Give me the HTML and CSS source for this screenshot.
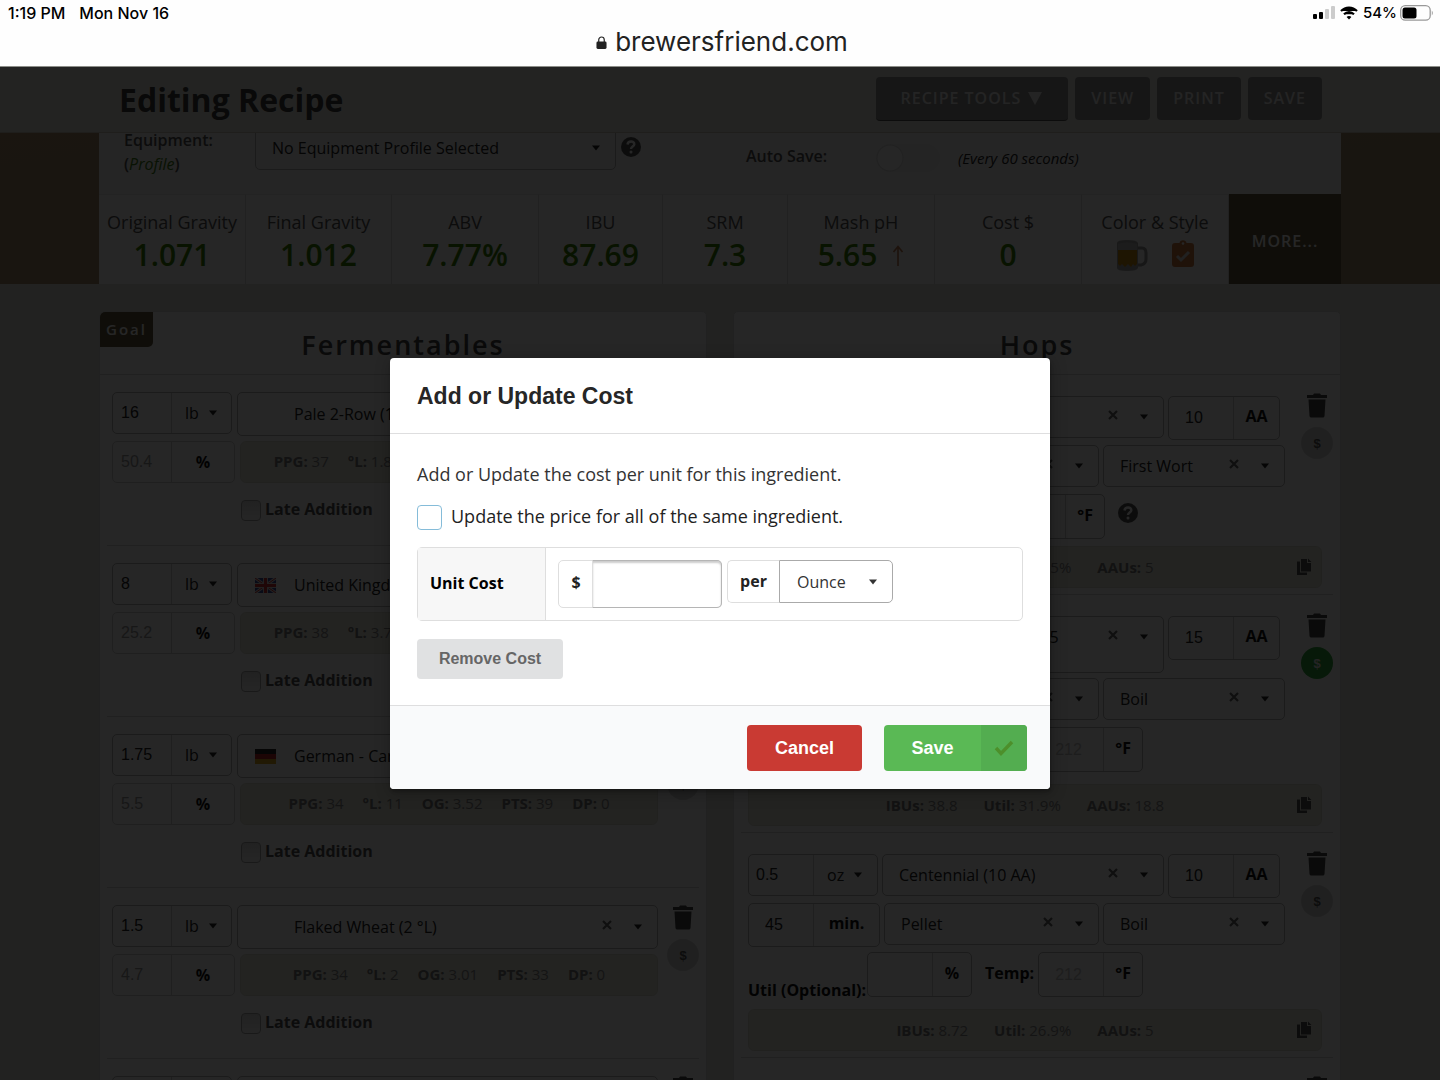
FILE: index.html
```html
<!DOCTYPE html>
<html lang="en">
<head>
    <meta charset="UTF-8">
    <meta name="viewport" content="width=device-width, initial-scale=1.0">
    <title>Editing Recipe - Brewer's Friend</title>
    <link rel="stylesheet" href="styles.css">
</head>
<body>
    <!-- Icon sprite -->
    <svg class="sprite" aria-hidden="true">
        <symbol id="trash" viewBox="0 0 22 25"><path d="M1 2h6l1-1.500h6L15 2h6v3H1zM2.500 6.500h17L18.500 23q-.2 1.500-1.700 1.500H5.200Q3.700 24.500 3.500 23z"/></symbol>
        <symbol id="caret" viewBox="0 0 10 6"><path d="M1 .5h8L5 5.500z"/></symbol>
        <symbol id="cross" viewBox="0 0 10 10"><path d="M1 1l8 8M9 1L1 9" fill="none" stroke="currentColor" stroke-width="2.200"/></symbol>
        <symbol id="copy" viewBox="0 0 16 18"><path d="M5 1h6v4h4v8.500H5z"/><path d="M12 .5L15.500 4H12zM1 3.500h3v11h7V17H1z"/></symbol>
        <symbol id="help" viewBox="0 0 20 20"><circle cx="10" cy="10" r="10"/><path d="M6.500 7.500C7 3.500 13.500 3.700 13.300 7.400 13.200 9.500 10 9.700 10 12" fill="none" stroke="#fff" stroke-width="2.400"/><circle cx="10" cy="15" r="1.500" fill="#fff"/></symbol>
    </svg>

    <!-- Browser chrome -->
    <div class="chrome">
        <div class="status-bar">
            <span>1:19 PM</span>
            <span>Mon Nov 16</span>
            <div class="status-right">
                <svg width="22" height="14" viewBox="0 0 22 14"><rect x="0" y="8" width="4" height="5" rx="1"/><rect x="6" y="6" width="4" height="7" rx="1"/><g fill="#ccc"><rect x="12" y="3" width="4" height="10" rx="1"/><rect x="18" y="0" width="4" height="13" rx="1"/></g></svg>
                <svg width="18" height="14" viewBox="0 0 18 14" fill="none" stroke="#000" stroke-width="2.200"><path d="M1 5C5.500.3 12.500.3 17 5"/><path d="M4 8.300c3-3 7-3 10 0"/><path d="M9 13.500L6.600 11c1.300-1.300 3.500-1.300 4.800 0z" fill="#000" stroke="none"/></svg>
                <span>54%</span>
                <svg width="34" height="16" viewBox="0 0 34 16"><rect x=".7" y=".7" width="29.500" height="14.500" rx="4.500" fill="none" stroke="#999" stroke-width="1.300"/><rect x="2.500" y="2.500" width="14" height="11" rx="2.500"/><path d="M31.800 5.500q2 2.500 0 5z" fill="#999"/></svg>
            </div>
        </div>
        <div class="url-bar">
            <svg width="11" height="13" viewBox="0 0 12 14"><rect x=".5" y="6" width="11" height="8" rx="1.500" fill="#222"/><path d="M3 6.500V4a3 3 0 0 1 6 0v2.500" fill="none" stroke="#222" stroke-width="1.300"/></svg>
            <span>brewersfriend.com</span>
        </div>
    </div>

    <div class="viewport">
        <header class="top-bar">
            <div class="top-inner">
                <h1>Editing Recipe</h1>
                <button class="top-btn tools">RECIPE TOOLS <svg width="14" height="13" viewBox="0 0 14 13"><path d="M0 0h14L7 13z"/></svg></button>
                <button class="top-btn">VIEW</button>
                <button class="top-btn print">PRINT</button>
                <button class="top-btn">SAVE</button>
            </div>
        </header>

        <div class="hero">
            <div class="container">
                <div class="equipment">
                    <div class="equip-label">
                        <label for="equipment">Equipment:</label>
                        <div>(<a href="#">Profile</a>)</div>
                    </div>
                    <div class="dropdown equip-select">
                        <select id="equipment"><option>No Equipment Profile Selected</option></select>
                        <svg class="caret"><use href="#caret"/></svg>
                    </div>
                    <svg class="help"><use href="#help"/></svg>
                    <label class="auto-label" for="autosave">Auto Save:</label>
                    <input class="toggle" type="checkbox" id="autosave">
                    <em>(Every 60 seconds)</em>
                </div>
                <div class="stats">
                    <div class="stat"><span>Original Gravity</span><b>1.071</b></div>
                    <div class="stat"><span>Final Gravity</span><b>1.012</b></div>
                    <div class="stat"><span>ABV</span><b>7.77%</b></div>
                    <div class="stat"><span>IBU</span><b>87.69</b></div>
                    <div class="stat"><span>SRM</span><b>7.3</b></div>
                    <div class="stat"><span>Mash pH</span><b>5.65 <svg class="arrow" width="12" height="21" viewBox="0 0 12 21"><path d="M6 21V2M1.500 7L6 1.500 10.500 7" fill="none" stroke="#c07a50" stroke-width="1.600"/></svg></b></div>
                    <div class="stat"><span>Cost $</span><b>0</b></div>
                    <div class="stat">
                        <span>Color &amp; Style</span>
                        <div class="style-icons">
                            <svg width="32" height="32" viewBox="0 0 32 32"><path d="M22 9h4q4 0 4 5v6q0 5-5 6h-3" fill="none" stroke="#999" stroke-width="3"/><path d="M1 4q0-3 10-3t11 3v25q-1 3-11 3T1 29z" fill="#aaa"/><path d="M2 11h19v14l-2 2-2-2-2 3-3-3-3 3-3-3-2 2-2-2z" fill="#c88a10"/><path d="M2 5q9-3 19 0v6H2z" fill="#bdbdbd"/></svg>
                            <svg width="22" height="28" viewBox="0 0 22 28"><path d="M3 4h4.500a3.600 3.600 0 0 1 7 0H19q3 0 3 3v18q0 3-3 3H3q-3 0-3-3V7q0-3 3-3z" fill="#cf7840"/><circle cx="11" cy="4.500" r="1.300" fill="#fff"/><path d="M5 17l4 4 8-8" fill="none" stroke="#ddd" stroke-width="3"/></svg>
                        </div>
                    </div>
                    <button class="more">MORE...</button>
                </div>
            </div>
        </div>

        <main class="container panels">
            <section class="panel">
                <span class="goal">Goal</span>
                <h2>Fermentables</h2>

                <div class="row ferm">
                    <div class="fields">
                        <div class="line">
                            <div class="group amount"><input type="text" value="16" aria-label="Amount"><select aria-label="Unit"><option>lb</option></select><svg class="caret"><use href="#caret"/></svg></div>
                            <div class="dropdown"><i class="flag"></i><select aria-label="Fermentable"><option>Pale 2-Row (1.8 °L)</option></select><button class="clear" aria-label="Clear"><svg><use href="#cross"/></svg></button><svg class="caret"><use href="#caret"/></svg></div>
                        </div>
                        <div class="line">
                            <div class="group percent"><input type="text" value="50.4" aria-label="Percent" disabled><span>%</span></div>
                            <div class="info"><span><b>PPG:</b> 37</span><span><b>°L:</b> 1.8</span><span><b>OG:</b> 34.7</span><span><b>PTS:</b> 43</span><span><b>DP:</b> 2240</span></div>
                        </div>
                        <label class="late"><input type="checkbox">Late Addition</label>
                    </div>
                    <div class="actions"><button class="trash" aria-label="Delete"><svg><use href="#trash"/></svg></button><button class="cost">$</button></div>
                </div>

                <div class="row ferm">
                    <div class="fields">
                        <div class="line">
                            <div class="group amount"><input type="text" value="8" aria-label="Amount"><select aria-label="Unit"><option>lb</option></select><svg class="caret"><use href="#caret"/></svg></div>
                            <div class="dropdown"><svg class="flag" viewBox="0 0 21 15"><path d="M0 0h21v15H0z" fill="#3a4a9c"/><path d="M0 0l21 15M21 0L0 15" stroke="#ddd" stroke-width="3"/><path d="M0 0l21 15M21 0L0 15" stroke="#c33" stroke-width="1"/><path d="M10.500 0v15M0 7.500h21" stroke="#ddd" stroke-width="5"/><path d="M10.500 0v15M0 7.500h21" stroke="#c33" stroke-width="3"/></svg><select aria-label="Fermentable"><option>United Kingdom - Maris Otter Pale (3.75 °L)</option></select><button class="clear" aria-label="Clear"><svg><use href="#cross"/></svg></button><svg class="caret"><use href="#caret"/></svg></div>
                        </div>
                        <div class="line">
                            <div class="group percent"><input type="text" value="25.2" aria-label="Percent" disabled><span>%</span></div>
                            <div class="info"><span><b>PPG:</b> 38</span><span><b>°L:</b> 3.75</span><span><b>OG:</b> 17.9</span><span><b>PTS:</b> 44</span><span><b>DP:</b> 960</span></div>
                        </div>
                        <label class="late"><input type="checkbox">Late Addition</label>
                    </div>
                    <div class="actions"><button class="trash" aria-label="Delete"><svg><use href="#trash"/></svg></button><button class="cost">$</button></div>
                </div>

                <div class="row ferm">
                    <div class="fields">
                        <div class="line">
                            <div class="group amount"><input type="text" value="1.75" aria-label="Amount"><select aria-label="Unit"><option>lb</option></select><svg class="caret"><use href="#caret"/></svg></div>
                            <div class="dropdown"><svg class="flag" viewBox="0 0 21 15"><path d="M0 0h21v5H0z" fill="#222"/><path d="M0 5h21v5H0z" fill="#b22"/><path d="M0 10h21v5H0z" fill="#d9a520"/></svg><select aria-label="Fermentable"><option>German - Carapils (11 °L)</option></select><button class="clear" aria-label="Clear"><svg><use href="#cross"/></svg></button><svg class="caret"><use href="#caret"/></svg></div>
                        </div>
                        <div class="line">
                            <div class="group percent"><input type="text" value="5.5" aria-label="Percent" disabled><span>%</span></div>
                            <div class="info"><span><b>PPG:</b> 34</span><span><b>°L:</b> 11</span><span><b>OG:</b> 3.52</span><span><b>PTS:</b> 39</span><span><b>DP:</b> 0</span></div>
                        </div>
                        <label class="late"><input type="checkbox">Late Addition</label>
                    </div>
                    <div class="actions"><button class="trash" aria-label="Delete"><svg><use href="#trash"/></svg></button><button class="cost">$</button></div>
                </div>

                <div class="row ferm">
                    <div class="fields">
                        <div class="line">
                            <div class="group amount"><input type="text" value="1.5" aria-label="Amount"><select aria-label="Unit"><option>lb</option></select><svg class="caret"><use href="#caret"/></svg></div>
                            <div class="dropdown"><i class="flag"></i><select aria-label="Fermentable"><option>Flaked Wheat (2 °L)</option></select><button class="clear" aria-label="Clear"><svg><use href="#cross"/></svg></button><svg class="caret"><use href="#caret"/></svg></div>
                        </div>
                        <div class="line">
                            <div class="group percent"><input type="text" value="4.7" aria-label="Percent" disabled><span>%</span></div>
                            <div class="info"><span><b>PPG:</b> 34</span><span><b>°L:</b> 2</span><span><b>OG:</b> 3.01</span><span><b>PTS:</b> 33</span><span><b>DP:</b> 0</span></div>
                        </div>
                        <label class="late"><input type="checkbox">Late Addition</label>
                    </div>
                    <div class="actions"><button class="trash" aria-label="Delete"><svg><use href="#trash"/></svg></button><button class="cost">$</button></div>
                </div>

                <div class="row ferm">
                    <div class="fields">
                        <div class="line">
                            <div class="group amount"><input type="text" aria-label="Amount"><select aria-label="Unit"><option></option></select></div>
                            <div class="dropdown"><select aria-label="Fermentable"><option></option></select></div>
                        </div>
                    </div>
                    <div class="actions"><button class="trash" aria-label="Delete"><svg><use href="#trash"/></svg></button></div>
                </div>
            </section>

            <section class="panel">
                <h2>Hops</h2>

                <div class="row hop first-wort">
                    <div class="hop-top">
                        <div class="fields">
                            <div class="line">
                                <div class="group weight"><input type="text" value="0.5" aria-label="Amount"><select aria-label="Unit"><option>oz</option></select><svg class="caret"><use href="#caret"/></svg></div>
                                <div class="dropdown"><select aria-label="Hop"><option>Centennial (10 AA)</option></select><button class="clear" aria-label="Clear"><svg><use href="#cross"/></svg></button><svg class="caret"><use href="#caret"/></svg></div>
                                <div class="group alpha"><input type="text" value="10" aria-label="Alpha acid"><span>AA</span></div>
                            </div>
                            <div class="line">
                                <div class="group time"><input type="text" value="60" aria-label="Time"><span>min.</span></div>
                                <div class="dropdown form"><select aria-label="Form"><option>Pellet</option></select><button class="clear" aria-label="Clear"><svg><use href="#cross"/></svg></button><svg class="caret"><use href="#caret"/></svg></div>
                                <div class="dropdown use"><select aria-label="Use"><option>First Wort</option></select><button class="clear" aria-label="Clear"><svg><use href="#cross"/></svg></button><svg class="caret"><use href="#caret"/></svg></div>
                            </div>
                            <div class="line util">
                                <label for="util1">Util:</label>
                                <div class="group small"><input type="text" id="util1"><span>%</span></div>
                                <label class="temp" for="temp1">Temp:</label>
                                <div class="group small"><input type="text" id="temp1"><span>°F</span></div>
                                <svg class="help"><use href="#help"/></svg>
                            </div>
                        </div>
                        <div class="actions"><button class="trash" aria-label="Delete"><svg><use href="#trash"/></svg></button><button class="cost">$</button></div>
                    </div>
                    <div class="info"><div><span><b>IBUs:</b> 8.26</span><span><b>Util:</b> 25.5%</span><span><b>AAUs:</b> 5</span></div><button aria-label="Copy"><svg><use href="#copy"/></svg></button></div>
                </div>

                <div class="row hop">
                    <div class="hop-top">
                        <div class="fields">
                            <div class="line">
                                <div class="group weight"><input type="text" value="1.25" aria-label="Amount"><select aria-label="Unit"><option>oz</option></select><svg class="caret"><use href="#caret"/></svg></div>
                                <div class="dropdown tall"><select aria-label="Hop"><option>Tomahawk / CTZ 15.5</option></select><button class="clear" aria-label="Clear"><svg><use href="#cross"/></svg></button><svg class="caret"><use href="#caret"/></svg></div>
                                <div class="group alpha"><input type="text" value="15" aria-label="Alpha acid"><span>AA</span></div>
                            </div>
                            <div class="line">
                                <div class="group time"><input type="text" value="60" aria-label="Time"><span>min.</span></div>
                                <div class="dropdown form"><select aria-label="Form"><option>Pellet</option></select><button class="clear" aria-label="Clear"><svg><use href="#cross"/></svg></button><svg class="caret"><use href="#caret"/></svg></div>
                                <div class="dropdown use"><select aria-label="Use"><option>Boil</option></select><button class="clear" aria-label="Clear"><svg><use href="#cross"/></svg></button><svg class="caret"><use href="#caret"/></svg></div>
                            </div>
                            <div class="line util">
                                <label for="util2">Util (Optional):</label>
                                <div class="group small"><input type="text" id="util2"><span>%</span></div>
                                <label class="temp" for="temp2">Temp:</label>
                                <div class="group small"><input type="text" id="temp2" placeholder="212"><span>°F</span></div>
                            </div>
                        </div>
                        <div class="actions"><button class="trash" aria-label="Delete"><svg><use href="#trash"/></svg></button><button class="cost has-cost">$</button></div>
                    </div>
                    <div class="info"><div><span><b>IBUs:</b> 38.8</span><span><b>Util:</b> 31.9%</span><span><b>AAUs:</b> 18.8</span></div><button aria-label="Copy"><svg><use href="#copy"/></svg></button></div>
                </div>

                <div class="row hop">
                    <div class="hop-top">
                        <div class="fields">
                            <div class="line">
                                <div class="group weight"><input type="text" value="0.5" aria-label="Amount"><select aria-label="Unit"><option>oz</option></select><svg class="caret"><use href="#caret"/></svg></div>
                                <div class="dropdown"><select aria-label="Hop"><option>Centennial (10 AA)</option></select><button class="clear" aria-label="Clear"><svg><use href="#cross"/></svg></button><svg class="caret"><use href="#caret"/></svg></div>
                                <div class="group alpha"><input type="text" value="10" aria-label="Alpha acid"><span>AA</span></div>
                            </div>
                            <div class="line">
                                <div class="group time"><input type="text" value="45" aria-label="Time"><span>min.</span></div>
                                <div class="dropdown form"><select aria-label="Form"><option>Pellet</option></select><button class="clear" aria-label="Clear"><svg><use href="#cross"/></svg></button><svg class="caret"><use href="#caret"/></svg></div>
                                <div class="dropdown use"><select aria-label="Use"><option>Boil</option></select><button class="clear" aria-label="Clear"><svg><use href="#cross"/></svg></button><svg class="caret"><use href="#caret"/></svg></div>
                            </div>
                            <div class="line util">
                                <label for="util3">Util (Optional):</label>
                                <div class="group small"><input type="text" id="util3"><span>%</span></div>
                                <label class="temp" for="temp3">Temp:</label>
                                <div class="group small"><input type="text" id="temp3" placeholder="212"><span>°F</span></div>
                            </div>
                        </div>
                        <div class="actions"><button class="trash" aria-label="Delete"><svg><use href="#trash"/></svg></button><button class="cost">$</button></div>
                    </div>
                    <div class="info"><div><span><b>IBUs:</b> 8.72</span><span><b>Util:</b> 26.9%</span><span><b>AAUs:</b> 5</span></div><button aria-label="Copy"><svg><use href="#copy"/></svg></button></div>
                </div>

                <div class="row hop">
                    <div class="hop-top">
                        <div class="fields"></div>
                        <div class="actions"><button class="trash" aria-label="Delete"><svg><use href="#trash"/></svg></button></div>
                    </div>
                </div>
            </section>
        </main>

        <!-- Cost modal -->
        <div class="dimmer">
            <form class="modal" role="dialog" aria-labelledby="modalTitle">
                <h3 id="modalTitle">Add or Update Cost</h3>
                <div class="modal-body">
                    <p>Add or Update the cost per unit for this ingredient.</p>
                    <label class="update-all"><input type="checkbox">Update the price for all of the same ingredient.</label>
                    <div class="cost-table">
                        <label class="cost-head" for="unitCost">Unit Cost</label>
                        <div class="cost-cell">
                            <div class="money"><span>$</span><input type="text" id="unitCost"></div>
                            <div class="per">
                                <label for="costUnit">per</label>
                                <div class="per-select"><select id="costUnit"><option>Ounce</option><option>Pound</option></select><svg class="caret"><use href="#caret"/></svg></div>
                            </div>
                        </div>
                    </div>
                    <button type="button" class="remove-btn">Remove Cost</button>
                </div>
                <div class="modal-footer">
                    <button type="button" class="cancel-btn">Cancel</button>
                    <button type="button" class="save-btn"><span>Save</span><i><svg width="20" height="16" viewBox="0 0 20 16"><path d="M2 8l5 5.500L18 2" fill="none" stroke="#4d8f2b" stroke-width="3.400"/></svg></i></button>
                </div>
            </form>
        </div>
    </div>
</body>
</html>
```

FILE: styles.css
```css
* {
    margin: 0;
    padding: 0;
    box-sizing: border-box;
}

:root {
    --sans: "Open Sans", "Noto Sans", sans-serif;
    --helvetica: "Liberation Sans", Arial, sans-serif;
    --border: #b4b4b4;
    --border-light: #d0d0d0;
    --green: #3a8000;
}

body {
    display: flex;
    flex-direction: column;
    height: 100vh;
    overflow: hidden;
    font: 16px/24px var(--sans);
    color: #222;
}

button,
input,
select {
    font: inherit;
    color: inherit;
    background: none;
    border: 0;
    border-radius: 0;
    outline: none;
    appearance: none;
}

button {
    cursor: pointer;
}

svg {
    display: block;
    flex: none;
    fill: currentColor;
}

.sprite {
    position: absolute;
    width: 0;
    height: 0;
}

/* Browser chrome */
.chrome {
    flex: none;
    height: 67px;
    background: #fefefe;
    border-bottom: 1px solid #8c8d88;
    color: #000;
    font-family: Inter, sans-serif;
}

.status-bar {
    display: flex;
    align-items: center;
    gap: 14px;
    height: 26px;
    padding: 0 6px 0 8px;
    font-size: 16px;
    font-weight: 500;
}

.status-right {
    display: flex;
    align-items: center;
    gap: 5px;
    margin-left: auto;
    font-size: 15px;
}

.status-right span {
    margin-right: -2px;
}

.url-bar {
    display: flex;
    align-items: center;
    justify-content: center;
    gap: 8px;
    height: 32px;
    padding-left: 4px;
    font-size: 26px;
    color: #222;
}

.viewport {
    position: relative;
    flex: 1;
    overflow: hidden;
    background: #e4e4da;
}

.container {
    width: 1242px;
    max-width: 100%;
    margin: 0 auto;
}

/* Sticky title bar */
.top-bar {
    position: relative;
    z-index: 1;
    background: #ecece4;
    border-bottom: 1px solid #ccc8b8;
}

.top-inner {
    display: flex;
    gap: 7px;
    width: 1242px;
    max-width: 100%;
    height: 65px;
    margin: 0 auto;
    padding: 10px 19px 0 20px;
}

.top-inner h1 {
    flex: 1;
    font-size: 32px;
    line-height: 46px;
    color: #404040;
}

.top-btn {
    height: 43px;
    padding: 0 16px 1px;
    border-radius: 4px;
    background: #939393;
    color: #f0f0f0;
    font-weight: 600;
    letter-spacing: 1px;
}

.top-btn.tools {
    display: flex;
    align-items: center;
    gap: 7px;
    height: 44px;
    padding: 0 26px 1px 24px;
    border-bottom: 1px solid #555;
}

/* Equipment and stats */
.hero {
    background: linear-gradient(170deg, #ab8e6d, #a0906e);
}

.hero .container {
    background: #f6f6f6;
}

.equipment {
    display: flex;
    height: 61px;
    padding-left: 25px;
}

.equip-label {
    width: 131px;
    margin-top: -5px;
    color: #555;
    font-weight: 600;
}

.equip-label a {
    color: #3f7d14;
    font-style: italic;
    font-weight: 400;
    text-decoration: none;
}

.equip-select.dropdown {
    flex: none;
    width: 361px;
    height: 44px;
    margin-top: -7px;
    padding-right: 14px;
}

.equipment .help {
    margin: 4px 105px 0 5px;
}

.auto-label {
    width: 130px;
    padding-top: 11px;
    color: #555;
    font-weight: 600;
}

.toggle {
    width: 64px;
    height: 28px;
    margin: 11px 18px 0 0;
    border-radius: 14px;
    background: radial-gradient(circle at 14px 14px, #fdfdfd 12px, #dcdcdc 13px, #eee 14px);
}

.equipment em {
    padding-top: 13px;
    font-size: 15px;
}

.help {
    width: 20px;
    height: 20px;
    color: #555;
}

.stats {
    display: grid;
    grid-template-columns: 147fr 146fr 147fr 124fr 125fr 147fr 147fr 147fr 112fr;
    height: 90px;
    background: #fbfbfb;
}

.stat {
    padding-top: 15px;
    border-top: 1px solid #e6e6e6;
    border-right: 1px solid #dadada;
    text-align: center;
    white-space: nowrap;
    font-size: 18px;
    color: #555;
}

.stat b {
    display: flex;
    justify-content: center;
    align-items: center;
    gap: 15px;
    height: 42px;
    color: var(--green);
    font-size: 30px;
    font-weight: 600;
}

.style-icons {
    display: flex;
    justify-content: center;
    gap: 24px;
    padding-top: 5px;
}

.more {
    padding-top: 3px;
    background: #645a40;
    color: #fff;
    font-weight: 600;
    letter-spacing: 1px;
}

/* Ingredient panels */
.panels {
    display: flex;
    gap: 26px;
    padding: 27px 0 0;
}

.panel {
    position: relative;
    flex: 1;
    min-width: 0;
    border: 1px solid #dcdcdc;
    border-radius: 5px;
    background: #fdfdfd;
}

.panel h2 {
    height: 63px;
    padding-top: 5px;
    border-bottom: 1px solid #d4d4d4;
    text-align: center;
    font-size: 27px;
    font-weight: 600;
    line-height: 56px;
    letter-spacing: 2px;
    color: #444;
}

.goal {
    position: absolute;
    top: 0;
    left: 0;
    height: 35px;
    padding: 0 6px;
    border-radius: 5px 0 5px 0;
    background: #645a40;
    color: #fff;
    font-size: 15px;
    font-weight: 600;
    line-height: 35px;
    letter-spacing: 2px;
}

.row {
    margin: 0 7px;
    border-bottom: 1px solid #d4d4d4;
}

.ferm {
    display: flex;
    gap: 9px;
    padding: 17px 0 24px 5px;
}

.fields {
    display: flex;
    flex: 1;
    flex-direction: column;
    gap: 5px;
    min-width: 0;
}

.line {
    display: flex;
    gap: 5px;
}

.group {
    display: flex;
    align-items: center;
    flex: none;
    width: 120px;
    height: 42px;
    border: 1px solid var(--border);
    border-radius: 5px;
}

.group input {
    width: 59px;
    height: 100%;
    padding-left: 8px;
    border-right: 1px solid var(--border-light);
    font-family: var(--helvetica);
}

.group select {
    width: 36px;
    padding-left: 13px;
}

.group span {
    flex: 1;
    text-align: center;
    font-weight: 700;
    color: #111;
}

.percent {
    width: 123px;
    border-color: var(--border-light);
}

.percent input {
    color: #999;
}

.caret {
    width: 10px;
    height: 6px;
}

.dropdown {
    display: flex;
    align-items: center;
    flex: 1;
    height: 44px;
    min-width: 0;
    padding: 0 14px 0 16px;
    border: 1px solid var(--border);
    border-radius: 5px;
}

.dropdown select {
    flex: 1;
    min-width: 0;
}

.clear {
    margin-right: 21px;
    padding-bottom: 5px;
    color: #666;
}

.clear svg {
    width: 10px;
    height: 10px;
}

.flag {
    width: 21px;
    height: 15px;
    margin: 0 18px 0 1px;
}

.info {
    display: flex;
    align-items: center;
    justify-content: center;
    flex: 1;
    gap: 19px;
    height: 42px;
    padding-bottom: 2px;
    border: 1px solid #dfdfd2;
    border-radius: 6px;
    background: #e9e9de;
    color: #888;
    font-size: 15px;
    white-space: nowrap;
}

.info b {
    color: #777;
}

.late {
    display: flex;
    align-items: flex-start;
    gap: 4px;
    height: 21px;
    margin: 12px 0 0 129px;
    font-weight: 700;
    line-height: 18px;
    color: #555;
}

.late input {
    width: 20px;
    height: 21px;
    border: 1px solid #aaa;
    border-radius: 4px;
    background: linear-gradient(#ddd, #fafafa);
}

.actions {
    display: flex;
    flex-direction: column;
    align-items: center;
    gap: 9px;
    width: 32px;
}

.trash svg {
    width: 22px;
    height: 25px;
    color: #444;
}

.cost {
    width: 32px;
    height: 32px;
    border-radius: 50%;
    background: #d8d8d8;
    color: #555;
    font: 700 13px var(--helvetica);
}

.cost.has-cost {
    background: #30a83c;
    color: #eee;
}

.hop {
    padding: 18px 0 6px 7px;
}

.hop-top {
    display: flex;
    gap: 16px;
}

.hop .fields {
    padding-top: 3px;
}

.hop .line {
    gap: 4px;
}

.hop .group input {
    width: 65px;
    padding-left: 16px;
}

.hop .group span {
    padding-bottom: 4px;
}

.hop .weight {
    width: 130px;
}

.hop .weight input {
    padding-left: 7px;
}

.hop .group select {
    width: 39px;
}

.hop .line .dropdown {
    height: 42px;
}

.line .dropdown.tall {
    height: 57px;
    padding-bottom: 15px;
}

.hop .alpha {
    width: 112px;
    height: 44px;
    margin-right: 5px;
}

.hop .time {
    width: 132px;
    height: 44px;
}

.hop .use {
    flex: none;
    width: 182px;
}

.util .group {
    width: 105px;
    height: 45px;
}

.util label {
    align-self: flex-end;
    width: 115px;
    color: #111;
    font-weight: 700;
    line-height: 14px;
    white-space: nowrap;
}

.util .temp {
    align-self: center;
    width: auto;
    margin-left: 9px;
    padding-bottom: 4px;
}

.first-wort .util label:first-child {
    width: 77px;
}

.util .help {
    margin: 9px 0 0 9px;
}

.util ::placeholder {
    color: #c4c4c4;
}

.hop .info {
    justify-content: space-between;
    margin: 12px 11px 0 0;
    padding: 0 9px 0 24px;
}

.first-wort .info {
    margin-top: 7px;
}

.hop .info div {
    display: flex;
    flex: 1;
    justify-content: center;
    gap: 26px;
}

.hop .info svg {
    width: 16px;
    height: 18px;
    color: #555;
}

/* Modal */
.dimmer {
    position: absolute;
    inset: 0;
    z-index: 2;
    display: flex;
    align-items: center;
    justify-content: center;
    background: rgba(0, 0, 0, 0.85);
}

.modal {
    width: 660px;
    max-width: 90%;
    border-radius: 4px;
    background: #fff;
    box-shadow: 1px 3px 3px rgba(0, 0, 0, 0.2), 1px 3px 15px 2px rgba(0, 0, 0, 0.2);
    overflow: hidden;
}

.modal h3 {
    padding: 25px 27px 23px;
    border-bottom: 1px solid #dededf;
    font: 700 23px/27px var(--helvetica);
    color: #262626;
}

.modal-body {
    padding: 27px 27px 26px;
    border-bottom: 1px solid #dededf;
}

.modal-body p {
    font-size: 18px;
    line-height: 26px;
    color: #333;
}

.update-all {
    display: flex;
    gap: 9px;
    height: 25px;
    margin: 18px 0 17px;
    font-size: 18px;
    line-height: 22px;
}

.update-all input {
    width: 25px;
    height: 25px;
    border: 1px solid #85bcd9;
    border-radius: 4px;
}

.cost-table {
    display: flex;
    height: 74px;
    border: 1px solid #dedede;
    border-radius: 5px;
}

.cost-head {
    width: 128px;
    padding-left: 12px;
    border-right: 1px solid #dedede;
    background: #f7f7f7;
    color: #000;
    font-weight: 700;
    line-height: 70px;
}

.cost-cell {
    display: flex;
    align-items: flex-start;
    gap: 5px;
    padding: 12px;
}

.money {
    display: flex;
    width: 164px;
    height: 48px;
    border: 1px solid #dedede;
    border-radius: 5px;
}

.money span {
    width: 34px;
    text-align: center;
    font-weight: 700;
    line-height: 42px;
}

.money input {
    flex: 1;
    min-width: 0;
    margin: -1px;
    border: 1px solid #b5b5b5;
    border-left-color: #dedede;
    border-radius: 0 5px 5px 0;
    box-shadow: inset 0 2px 2px #ccc;
}

.per {
    display: flex;
    height: 43px;
}

.per label {
    width: 52px;
    border: 1px solid #dedede;
    border-right: 0;
    border-radius: 5px 0 0 5px;
    text-align: center;
    font-weight: 700;
    line-height: 40px;
}

.per-select {
    display: flex;
    align-items: center;
    width: 114px;
    padding: 0 14px 0 17px;
    border: 1px solid #aaa;
    border-radius: 0 5px 5px 0;
    color: #333;
}

.per-select select {
    flex: 1;
    min-width: 0;
}

.remove-btn {
    display: block;
    width: 146px;
    height: 40px;
    margin-top: 18px;
    border-radius: 4px;
    background: #e0e1e2;
    color: #666;
    font: 700 16px var(--helvetica);
}

.modal-footer {
    display: flex;
    justify-content: flex-end;
    gap: 22px;
    padding: 19px 23px 18px;
    background: #f9fafb;
}

.cancel-btn,
.save-btn {
    height: 46px;
    border-radius: 4px;
    color: #fff;
    font: 700 18px var(--helvetica);
}

.cancel-btn {
    width: 115px;
    background: #c93a33;
}

.save-btn {
    display: flex;
    align-items: center;
    width: 143px;
    background: #5ab955;
    overflow: hidden;
}

.save-btn span {
    flex: 1;
}

.save-btn i {
    display: flex;
    align-items: center;
    justify-content: center;
    width: 46px;
    height: 46px;
    background: #53ad50;
}
```
